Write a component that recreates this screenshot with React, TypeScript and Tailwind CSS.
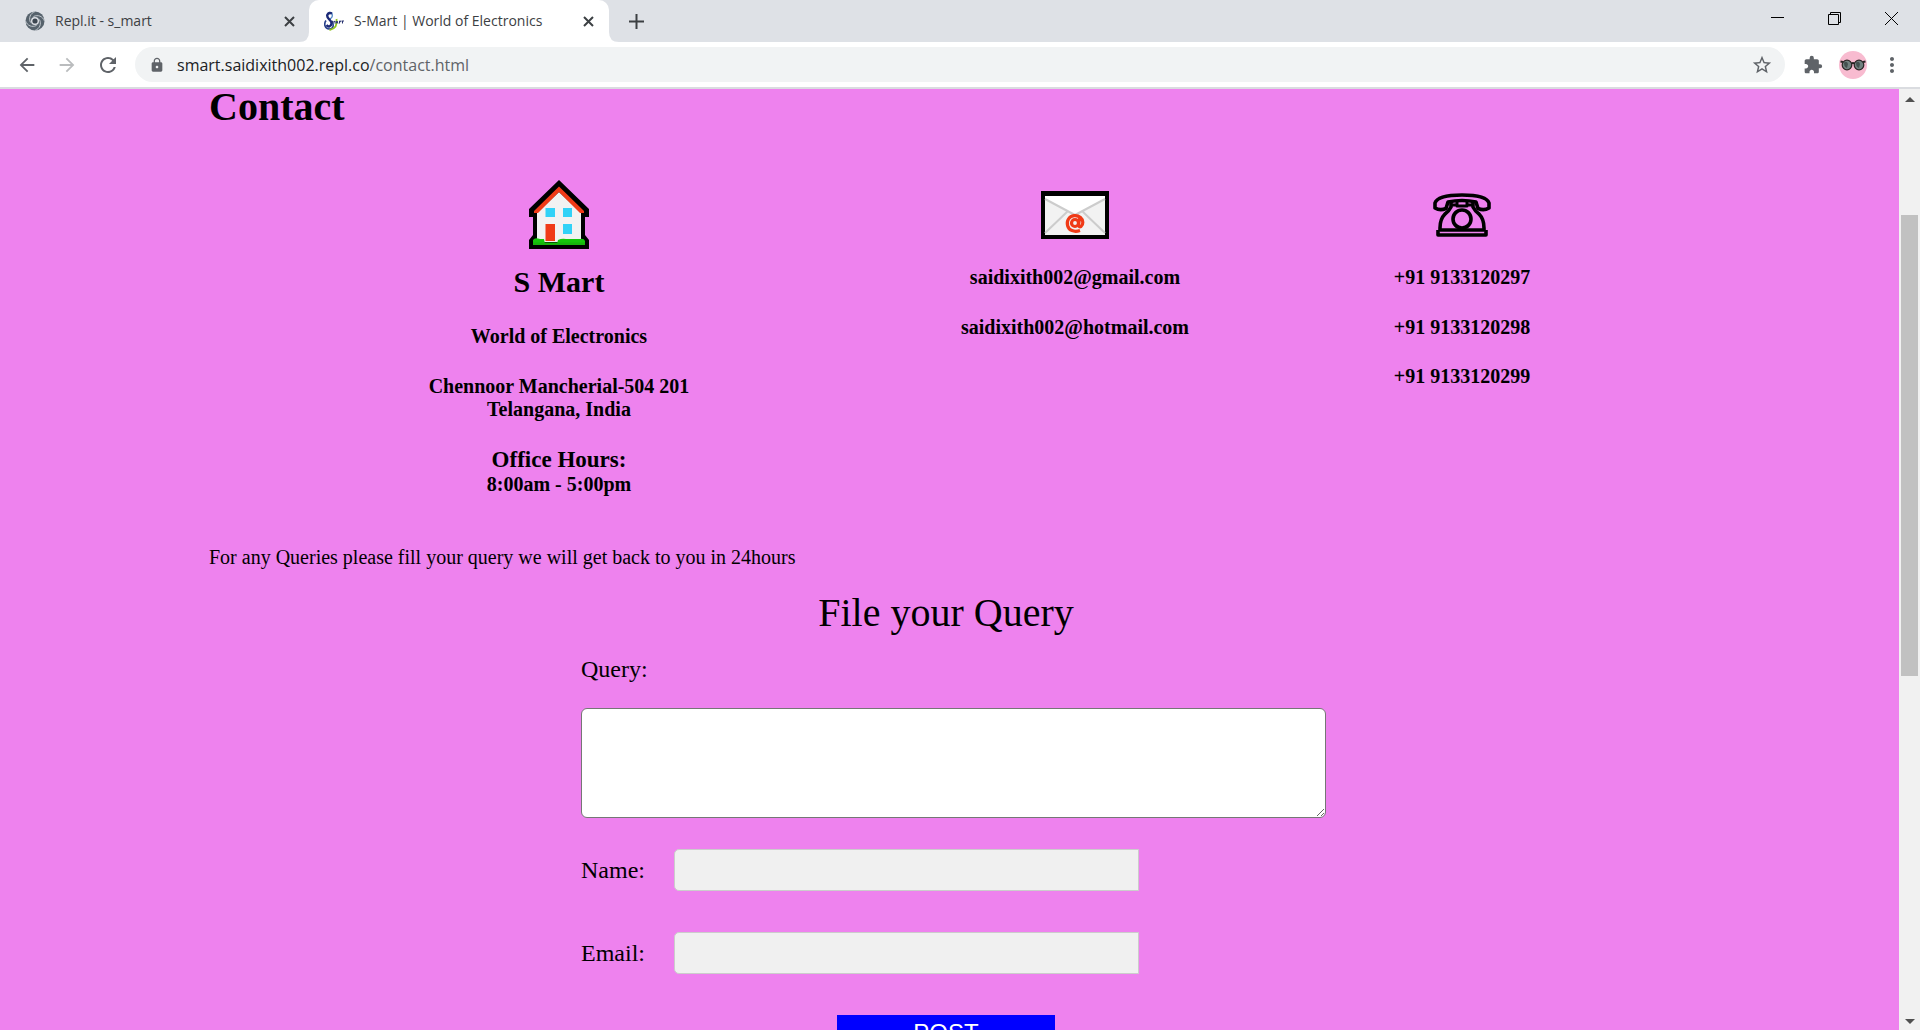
import React from "react";
import { MdArrowBack, MdArrowForward, MdRefresh, MdLock, MdStarBorder, MdExtension, MdMoreVert } from "react-icons/md";

function ReplitIcon() {
  return (
    <svg className="size-5 shrink-0" viewBox="0 0 20 20" fill="none">
      <circle cx="10" cy="10" r="9.500" fill="#56626c" />
      <g stroke="#c3c9cf" strokeWidth="1">
        <path d="M10 .500C5 2.500 3.500 7 5.500 11.500" />
        <path d="M19.500 10C17.500 5 13 3.500 8.500 5.500" />
        <path d="M10 19.500C15 17.500 16.500 13 14.500 8.500" />
        <path d="M.500 10C2.500 15 7 16.500 11.500 14.500" />
      </g>
      <circle cx="10" cy="10" r="4" fill="#dee1e6" />
      <circle cx="10" cy="10" r="2.600" fill="#3c4650" />
    </svg>
  );
}

function SMartIcon() {
  return (
    <svg className="size-5 shrink-0" viewBox="0 0 20 20" fill="none">
      <path d="M5 1.500C9 1 9.500 6 6 8" stroke="#4f86c6" strokeWidth="1.200" />
      <path d="M2 9.500C-.500 13 1 18 5 18S10 15 8.500 11" stroke="#27408b" strokeWidth="1.600" />
      <path d="M12.500 8C13.500 14 11 18 5.500 19" stroke="#8fc31f" strokeWidth="1.800" />
      <path d="M8 2.500C4.500 1 2.500 3.500 3.500 6S8 9.500 7.500 12.500 4.500 16.500 2.500 14" stroke="#1c2a78" strokeWidth="2.400" />
      <path d="M8.500 12V10l1.200 1L11 10v2.500M12 12.500l1-2.500 1 2.500M15.500 12.500V10h1.200v1.200M18.500 10v2.500M17.500 10H20" stroke="#2a3470" strokeWidth="1" />
    </svg>
  );
}

function TabClose() {
  return (
    <svg className="size-[11px]" viewBox="0 0 11 11">
      <path d="M1 1L10 10M10 1L1 10" stroke="currentColor" strokeWidth="2" />
    </svg>
  );
}

function TabFoot({ className }: { className: string }) {
  return (
    <svg className={className} viewBox="0 0 10 10">
      <path d="M10 0V10H0Q10 10 10 0Z" fill="#fff" />
    </svg>
  );
}

function House() {
  return (
    <svg className="h-[70px] w-[60px]" viewBox="0 0 60 70">
      <path d="M30 0L60 29V37H56V55L60 60V69H0V60L4 55V37H0V29Z" fill="#000" />
      <path d="M30 12L52 33V62H8V33Z" fill="#f2f2f2" />
      <path d="M30 6.500L55 31V33H51L30 12 9 33H5V31Z" fill="#f03a17" />
      <path d="M4 64V60Q6 57 11 59L15 59 16 64ZM28 64L29 60Q33 58 37 59H51Q55 58 56 61V64Z" fill="#16c60c" />
      <path d="M4 62.500H56V65H4Z" fill="#16b50c" />
      <path d="M16.500 44H26V61H16.500Z" fill="#f03a17" />
      <path d="M16.500 28H26V37H16.500ZM34 28H43V37H34ZM34 44H43V54H34Z" fill="#31d2f7" />
    </svg>
  );
}

function Envelope() {
  return (
    <svg className="h-12 w-[68px]" viewBox="0 0 68 48">
      <path d="M0 0H68V48H0Z" fill="#000" />
      <path d="M4 5H64V44H4Z" fill="#f2f2f2" />
      <path d="M4 5H64V8L34 24 4 8Z" fill="#fff" />
      <path d="M4 8L34 24 64 8M27 20L4 42M41 20L64 42" stroke="#ccc" strokeWidth="2" fill="none" />
      <g fill="none" stroke="#f03a17" strokeWidth="3.200">
        <circle cx="34" cy="32" r="3.500" />
        <path d="M38.500 27.500L37.500 34Q38 36.500 40 35.500C42.500 33.500 42.500 29 39.500 26.500C36 23.500 30 24 27.500 28S26.500 38 31 39.600Q34.500 41 39 39.500" />
      </g>
    </svg>
  );
}

function Telephone() {
  return (
    <svg className="h-11 w-[58px]" viewBox="0 0 58 44" fill="none" stroke="#000" strokeWidth="3.600" strokeLinejoin="round">
      <path d="M2 10C4 4 16 2 29 2S54 4 56 10V15Q51 18 45 15.500L43 9Q29 6 15 9L13 15.500Q7 18 2 15Z" />
      <path d="M18 9V14Q16 18 12 21C8 25 7 30 7 35V37H51V35C51 30 50 25 46 21Q42 18 40 14V9" />
      <path d="M5 37V42H53V37" />
      <path d="M24 8V13H34V8M18 12H24M34 12H40" strokeWidth="3" />
      <ellipse cx="29" cy="26" rx="9" ry="9" />
    </svg>
  );
}

function Avatar() {
  return (
    <svg className="size-7" viewBox="0 0 28 28">
      <circle cx="14" cy="14" r="14" fill="#f8bbd0" />
      <circle cx="8" cy="14" r="4.800" fill="#71807f" stroke="#2a2424" strokeWidth="1.200" />
      <circle cx="20" cy="14" r="4.800" fill="#71807f" stroke="#2a2424" strokeWidth="1.200" />
      <path d="M5 11.500Q8 9.500 9 13L8 17Q5 16 5 11.500ZM17 11.500Q20 9.500 21 13L20 17Q17 16 17 11.500Z" fill="#43504f" />
      <path d="M1.500 10.500L4 11M26.500 10.500L24 11M12.500 12.500Q14 11.500 15.500 12.500" stroke="#2a2424" strokeWidth="1.800" fill="none" />
    </svg>
  );
}

function TabStrip() {
  return (
    <header className="flex h-[42px] shrink-0 bg-[#dee1e6] text-sm text-[#3c4043]">
      <div className="flex w-[309px] items-center pl-[25px] pr-[14px]">
        <ReplitIcon />
        <span className="ml-[10px] grow">Repl.it - s_mart</span>
        <button aria-label="Close Repl.it tab"><TabClose /></button>
      </div>
      <div className="relative flex w-[300px] items-center rounded-t-[10px] bg-white pl-[15px] pr-[15px]">
        <TabFoot className="absolute bottom-0 right-full size-[10px]" />
        <TabFoot className="absolute bottom-0 left-full size-[10px] -scale-x-100" />
        <SMartIcon />
        <span className="ml-[10px] grow whitespace-nowrap">S-Mart | World of Electronics</span>
        <button aria-label="Close S-Mart tab"><TabClose /></button>
      </div>
      <button aria-label="New tab" className="ml-5">
        <svg className="size-[15px]" viewBox="0 0 15 15"><path d="M7.500 0V15M0 7.500H15" stroke="currentColor" strokeWidth="2" /></svg>
      </button>
      <div className="ml-auto flex items-center gap-11 pr-[22px] pb-[5px] text-black">
        <button aria-label="Minimize"><svg className="size-[13px]" viewBox="0 0 13 13"><path d="M0 5.500H13" stroke="currentColor" /></svg></button>
        <button aria-label="Restore"><svg className="size-[13px]" viewBox="0 0 13 13" fill="none" stroke="currentColor"><path d="M.500 2.500H10.500V12.500H.500ZM2.500 2.500V.500H12.500V10.500H10.500" /></svg></button>
        <button aria-label="Close window"><svg className="size-[13px]" viewBox="0 0 13 13"><path d="M0 0L13 13M13 0L0 13" stroke="currentColor" /></svg></button>
      </div>
    </header>
  );
}

function Toolbar() {
  return (
    <nav className="flex h-[47px] shrink-0 items-center border-b-2 border-[#dadce0] bg-white text-[#5f6368]">
      <button aria-label="Back" className="ml-4"><MdArrowBack className="size-[22px]" /></button>
      <button aria-label="Forward" className="ml-[18px] text-[#babcbe]"><MdArrowForward className="size-[22px]" /></button>
      <button aria-label="Reload" className="ml-[18px]"><MdRefresh className="size-6" /></button>
      <div className="ml-[15px] flex h-[35px] grow items-center rounded-full bg-[#f1f3f4] pl-[14px] pr-3">
        <MdLock className="size-4" />
        <span className="ml-3 grow text-base"><span className="text-[#202124]">smart.saidixith002.repl.co</span>/contact.html</span>
        <button aria-label="Bookmark this page"><MdStarBorder className="size-[22px]" /></button>
      </div>
      <button aria-label="Extensions" className="ml-[18px]"><MdExtension className="size-5" /></button>
      <button aria-label="Profile" className="ml-4"><Avatar /></button>
      <button aria-label="Menu" className="ml-[13px] mr-4"><MdMoreVert className="size-6" /></button>
    </nav>
  );
}

function Scrollbar() {
  return (
    <div className="flex w-[21px] shrink-0 flex-col items-center bg-[#f1f1f1]">
      <svg className="mt-2 h-[6px] w-[10px] shrink-0" viewBox="0 0 10 6"><path d="M5 0L10 5H0Z" fill="#505050" /></svg>
      <div className="grow-[112]" />
      <div className="w-[17px] grow-[460] bg-[#c1c1c1]" />
      <div className="grow-[341]" />
      <svg className="mb-[6px] h-[6px] w-[10px] shrink-0" viewBox="0 0 10 6"><path d="M5 6L0 1H10Z" fill="#505050" /></svg>
    </div>
  );
}

function Field({ id, label, type }: { id: string; label: string; type: string }) {
  return (
    <div className="flex items-center">
      <label htmlFor={id} className="w-[93px]">{label}</label>
      <input id={id} type={type} className="h-[42px] w-[465px] rounded-l-[5px] border border-[#ccc] bg-[#f0f0f0] px-2" />
    </div>
  );
}

function Contact() {
  return (
    <main className="min-w-0 grow overflow-hidden bg-[#ee82ee] pl-[209px] pr-[216px] font-['Liberation_Serif',serif] text-black">
      <h1 className="text-[40px] leading-[35px] font-bold">Contact</h1>
      <div className="mt-14 grid grid-cols-[700fr_332fr_442fr] text-center text-xl leading-[23px] font-bold">
        <section>
          <div className="flex h-[70px] items-center justify-center"><House /></div>
          <h2 className="mt-[14px] text-[30px] leading-[36px]">S Mart</h2>
          <p className="mt-[25px]">World of Electronics</p>
          <p className="mt-[27px]">Chennoor Mancherial-504 201<br />Telangana, India</p>
          <h3 className="mt-[26px] text-[23px] leading-[26px]">Office Hours:</h3>
          <p>8:00am - 5:00pm</p>
        </section>
        <section>
          <div className="flex h-[70px] items-center justify-center"><Envelope /></div>
          <p className="mt-4">saidixith002@gmail.com</p>
          <p className="mt-[27px]">saidixith002@hotmail.com</p>
        </section>
        <section>
          <div className="flex h-[70px] items-center justify-center"><Telephone /></div>
          <p className="mt-4">+91 9133120297</p>
          <p className="mt-[27px]">+91 9133120298</p>
          <p className="mt-[26px]">+91 9133120299</p>
        </section>
      </div>
      <p className="mt-[50px] text-xl leading-[23px]">For any Queries please fill your query we will get back to you in 24hours</p>
      <form className="mt-[21px] text-2xl leading-7" onSubmit={(e) => e.preventDefault()}>
        <h2 className="text-center text-[40px] leading-[46px]">File your Query</h2>
        <div className="ml-[372px] mt-[19px] flex flex-col">
          <label htmlFor="query">Query:</label>
          <textarea id="query" className="mt-[25px] h-[110px] w-[745px] rounded-md border border-[#767676] bg-white p-2" />
          <div className="mt-[31px] flex flex-col gap-[41px]">
            <Field id="name" label="Name:" type="text" />
            <Field id="email" label="Email:" type="email" />
          </div>
        </div>
        <button type="submit" className="mx-auto mt-[41px] block h-9 w-[218px] bg-[#0000ff] font-['Liberation_Sans',sans-serif] text-2xl text-white">POST</button>
      </form>
    </main>
  );
}

export default function App() {
  return (
    <div className="flex h-screen flex-col overflow-hidden font-['Open_Sans',sans-serif]">
      <TabStrip />
      <Toolbar />
      <div className="flex min-h-0 grow">
        <Contact />
        <Scrollbar />
      </div>
    </div>
  );
}
